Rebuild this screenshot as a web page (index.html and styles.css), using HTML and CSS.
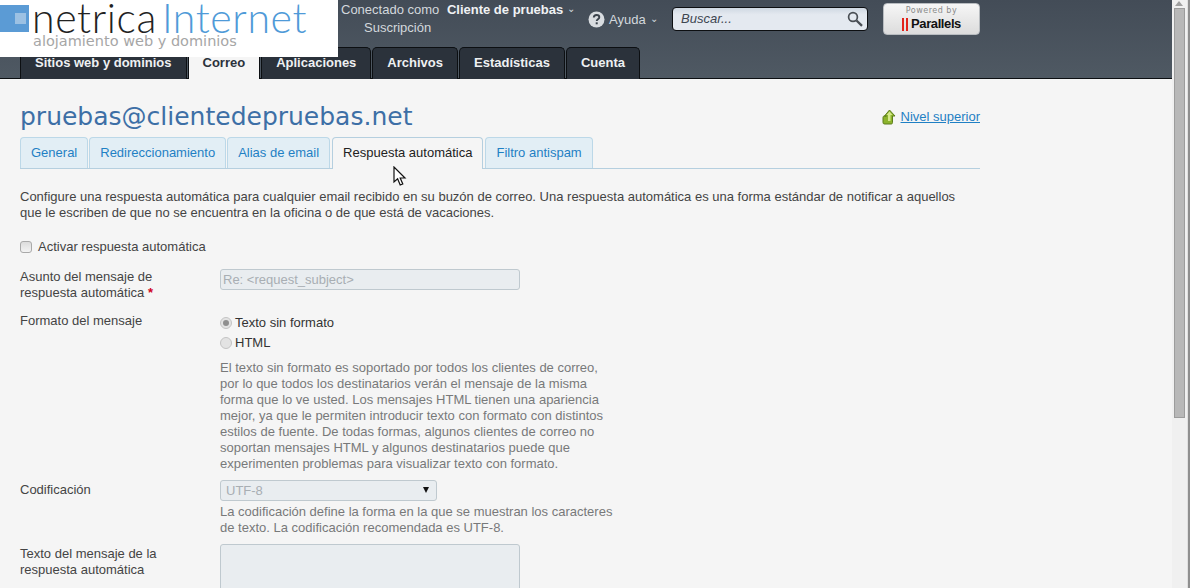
FILE: index.html
```html
<!DOCTYPE html>
<html lang="es">
<head>
    <meta charset="UTF-8">
    <meta name="viewport" content="width=device-width, initial-scale=1.0">
    <title>Respuesta automática</title>
    <link rel="stylesheet" href="styles.css">
</head>
<body>
    <div class="page">
        <div class="logo">
            <div class="logo-mark"><span class="logo-square"></span></div>
            <div class="logo-text">
                <div class="logo-name">netrica<span class="logo-blue">Internet</span></div>
                <div class="logo-slogan">alojamiento web y dominios</div>
            </div>
        </div>

        <header class="header">
            <div class="header-top">
                <div class="user-info">
                    <div>Conectado como <b class="user-name">Cliente de pruebas</b> <span class="caret">⌄</span></div>
                    <div class="user-sub">Suscripción</div>
                </div>
                <div class="help">
                    <svg class="help-icon" width="17" height="17" viewBox="0 0 17 17"><circle cx="8.5" cy="8.5" r="8" fill="#d8dce0"/><path d="M5.8 6.6c0-1.7 1.2-2.6 2.8-2.6s2.7.9 2.7 2.2c0 2-2.6 2-2.6 3.8" fill="none" stroke="#3b434c" stroke-width="1.9"/><rect x="7.7" y="11.3" width="2" height="2" fill="#3b434c"/></svg>
                    <span>Ayuda</span> <span class="caret">⌄</span>
                </div>
                <div class="search">
                    <span class="search-text">Buscar...</span>
                    <svg width="16" height="16" viewBox="0 0 16 16"><circle cx="6" cy="6" r="4.4" fill="none" stroke="#4a4f55" stroke-width="1.7"/><path d="M9.5 9.5L15 14.8" stroke="#4a4f55" stroke-width="2.4"/></svg>
                </div>
                <div class="powered">
                    <div class="powered-by">Powered by</div>
                    <div class="parallels"><span class="parallels-bars"></span><span>Parallels</span></div>
                </div>
            </div>
            <nav class="main-nav">
                <a class="main-tab">Sitios web y dominios</a>
                <a class="main-tab active">Correo</a>
                <a class="main-tab">Aplicaciones</a>
                <a class="main-tab">Archivos</a>
                <a class="main-tab">Estadísticas</a>
                <a class="main-tab">Cuenta</a>
            </nav>
        </header>

        <main class="content">
            <div class="title-row">
                <h1>pruebas@clientedepruebas.net</h1>
                <a class="up-level">
                    <svg width="14" height="16" viewBox="0 0 14 16"><path d="M7.5 1L13 7H10.500V13.500C10.500 14.500 10 15 9 15H3C1.500 15 1 14.500 1 13.500V8.500C1 7.500 1.500 7 2.500 7H4.500H2.500Z" fill="#8cb32c" stroke="#5d7d1c" stroke-width="1"/><path d="M7.500 2.500L10.500 6H8.500V12H6V6H4.500Z" fill="#d5e88a"/></svg>
                    <span>Nivel superior</span>
                </a>
            </div>

            <div class="tabs">
                <a class="tab">General</a>
                <a class="tab">Redireccionamiento</a>
                <a class="tab">Alias de email</a>
                <a class="tab active">Respuesta automática</a>
                <a class="tab">Filtro antispam</a>
            </div>

            <p class="intro">Configure una respuesta automática para cualquier email recibido en su buzón de correo. Una respuesta automática es una forma estándar de notificar a aquellos que le escriben de que no se encuentra en la oficina o de que está de vacaciones.</p>

            <label class="check-row"><span class="fake-check"></span>Activar respuesta automática</label>

            <div class="form-row subject-row">
                <div class="form-label">Asunto del mensaje de respuesta automática <span class="required">*</span></div>
                <div class="form-field">
                    <div class="input subject-input">Re: &lt;request_subject&gt;</div>
                </div>
            </div>

            <div class="form-row format-row">
                <div class="form-label">Formato del mensaje</div>
                <div class="form-field">
                    <div class="radio-row"><span class="fake-radio checked"></span>Texto sin formato</div>
                    <div class="radio-row"><span class="fake-radio"></span>HTML</div>
                    <p class="hint format-hint">El texto sin formato es soportado por todos los clientes de correo, por lo que todos los destinatarios verán el mensaje de la misma forma que lo ve usted. Los mensajes HTML tienen una apariencia mejor, ya que le permiten introducir texto con formato con distintos estilos de fuente. De todas formas, algunos clientes de correo no soportan mensajes HTML y algunos destinatarios puede que experimenten problemas para visualizar texto con formato.</p>
                </div>
            </div>

            <div class="form-row encoding-row">
                <div class="form-label">Codificación</div>
                <div class="form-field">
                    <div class="input select">UTF-8<span class="select-arrow"></span></div>
                    <p class="hint">La codificación define la forma en la que se muestran los caracteres de texto. La codificación recomendada es UTF-8.</p>
                </div>
            </div>

            <div class="form-row message-row">
                <div class="form-label">Texto del mensaje de la respuesta automática</div>
                <div class="form-field">
                    <div class="input textarea"></div>
                </div>
            </div>

            <svg class="cursor" width="14" height="21" viewBox="0 0 14 21"><path d="M1 1V16L4.600 12.800L7.200 19L9.800 18L7.200 12H12Z" fill="#fff" stroke="#111" stroke-width="1.200"/></svg>
        </main>
    </div>

    <div class="scrollbar">
        <span class="scroll-arrow"></span>
        <div class="scroll-thumb"></div>
    </div>
</body>
</html>
```

FILE: styles.css
```css
html, body {
    height: 100%;
}
body {
    margin: 0;
    display: flex;
    height: 588px;
    overflow: hidden;
    background-color: #f5f5f5;
    color: #444;
    font-family: "Liberation Sans", Arial, sans-serif;
    font-size: 13px;
    line-height: 16px;
}
.page {
    position: relative;
    width: 1172px;
    height: 588px;
    overflow: hidden;
}

/* logo sits over the header */
.logo {
    position: absolute;
    left: 0;
    top: 0;
    width: 338px;
    height: 57px;
    background-color: #fff;
    display: flex;
    z-index: 2;
}
.logo-mark {
    width: 29px;
    height: 27px;
    margin-top: 5px;
    background-color: #5b9bd5;
    border-bottom: 0;
    position: relative;
}
.logo-square {
    position: absolute;
    left: 15px;
    top: 8px;
    width: 11px;
    height: 11px;
    background-color: #9cc1e3;
}
.logo-text {
    margin-left: 3px;
}
.logo-name {
    font-family: Lato, sans-serif;
    font-weight: 300;
    font-size: 41px;
    line-height: 36px;
    letter-spacing: 0.6px;
    color: #222;
}
.logo-blue {
    color: #4f9ad8;
    margin-left: 5px;
}
.logo-slogan {
    font-family: "DejaVu Sans", sans-serif;
    font-weight: 400;
    font-size: 14.500px;
    line-height: 16px;
    margin-top: -3px;
    margin-left: 1px;
    color: #a6a6a6;
}

.header {
    height: 78px;
    border-bottom: 1px solid #0c0f12;
    background: linear-gradient(#434c57, #4f5963);
    display: flex;
    flex-direction: column;
    justify-content: space-between;
}
.header-top {
    display: flex;
    align-items: flex-start;
    color: #d3d8dd;
    padding-left: 341px;
}
.user-info {
    width: 236px;
    padding-top: 1px;
    line-height: 18px;
    white-space: nowrap;
}
.user-name {
    color: #f0f2f4;
    margin-left: 4px;
}
.user-sub {
    padding-left: 23px;
}
.caret {
    display: inline-block;
    font-size: 10px;
    line-height: 10px;
    position: relative;
    top: -2px;
}
.help {
    width: 84px;
    margin-top: 11px;
    margin-left: 11px;
    display: flex;
    align-items: center;
    gap: 4px;
    white-space: nowrap;
}
.help .caret {
    top: -1px;
}
.search {
    box-sizing: border-box;
    width: 196px;
    height: 24px;
    margin-top: 7px;
    padding: 0 4px 0 8px;
    display: flex;
    align-items: center;
    justify-content: space-between;
    background: linear-gradient(#cfd8e2, #e4e9f0 30%);
    border: 1px solid #0d0f12;
    border-radius: 4px;
}
.search-text {
    font-style: italic;
    color: #3d4650;
}
.powered {
    box-sizing: border-box;
    width: 97px;
    height: 32px;
    margin-top: 3px;
    margin-left: 15px;
    background: linear-gradient(#f6f6f6, #dcdcdc);
    border: 1px solid #b8bcc0;
    border-radius: 4px;
    text-align: center;
}
.powered-by {
    font-family: "DejaVu Sans", sans-serif;
    font-size: 8px;
    line-height: 12px;
    letter-spacing: 0.5px;
    color: #8a8a8a;
    margin-top: 1px;
}
.parallels {
    display: flex;
    justify-content: center;
    align-items: center;
    gap: 3px;
    font-size: 13px;
    line-height: 14px;
    font-weight: 700;
    letter-spacing: -0.4px;
    color: #111;
}
.parallels-bars {
    width: 2px;
    height: 13px;
    border-left: 2px solid #e2231a;
    border-right: 2px solid #e2231a;
}

.main-nav {
    display: flex;
    padding-left: 20px;
    gap: 1px;
    height: 31px;
}
.main-tab {
    box-sizing: border-box;
    height: 32px;
    padding: 0 14px;
    background-color: #2b323b;
    border: 1px solid #0c0f12;
    border-bottom: 0;
    border-radius: 5px 5px 0 0;
    color: #eef0f2;
    font-weight: 700;
    line-height: 29px;
    white-space: nowrap;
}
.main-tab.active {
    background-color: #f5f5f5;
    color: #2b323b;
}

.content {
    position: relative;
    width: 960px;
    padding-left: 20px;
}
.title-row {
    display: flex;
    justify-content: space-between;
    align-items: center;
    height: 58px;
    padding-top: 0;
}
h1 {
    margin: 18px 0 0;
    font-family: "DejaVu Sans", sans-serif;
    font-weight: 400;
    font-size: 25px;
    line-height: 40px;
    color: #3d6fa6;
}
.up-level {
    display: flex;
    align-items: center;
    gap: 5px;
    margin-top: 18px;
    color: #1f80c4;
    text-decoration: underline;
}

.tabs {
    display: flex;
    gap: 1px;
    height: 31px;
    border-bottom: 1px solid #b5cfdf;
}
.tab {
    box-sizing: border-box;
    height: 31px;
    padding: 0 10px;
    background-color: #e2eef5;
    border: 1px solid #bcd8e8;
    border-bottom: 0;
    border-radius: 4px 4px 0 0;
    color: #1f80c4;
    line-height: 30px;
    white-space: nowrap;
}
.tab.active {
    height: 32px;
    background-color: #f5f5f5;
    border-color: #b5cfdf;
    color: #222;
    margin: 0 1px;
}

.intro {
    margin: 20px 0 0;
}
.check-row {
    display: flex;
    align-items: center;
    gap: 6px;
    margin-top: 18px;
    height: 16px;
}
.fake-check {
    box-sizing: border-box;
    width: 12px;
    height: 12px;
    margin-top: -1px;
    border: 1px solid #a9a9a9;
    border-radius: 3px;
    background: linear-gradient(#dcdcdc, #f3f3f3);
}

.form-row {
    display: flex;
}
.form-label {
    width: 200px;
    flex-shrink: 0;
    box-sizing: border-box;
    padding-right: 8px;
}
.form-field {
    width: 393px;
}
.required {
    color: #d0021b;
    font-weight: 700;
}
.input {
    box-sizing: border-box;
    background-color: #e9edf0;
    border: 1px solid #bfc9cf;
    border-radius: 3px;
    color: #a8aeb3;
}
.subject-row {
    margin-top: 14px;
}
.subject-input {
    width: 300px;
    height: 21px;
    line-height: 19px;
    padding-left: 2px;
    margin-top: 0;
}
.format-row {
    margin-top: 11px;
}
.format-row .form-label {
    padding-top: 1px;
}
.radio-row {
    display: flex;
    align-items: center;
    height: 20px;
    margin-top: 1px;
    color: #333;
}
.radio-row + .radio-row {
    margin-top: 0;
}
.fake-radio {
    box-sizing: border-box;
    position: relative;
    width: 12px;
    height: 12px;
    margin-right: 3px;
    border: 1px solid #c4c4c4;
    border-radius: 50%;
    background-color: #e3e3e3;
}
.fake-radio.checked::after {
    content: "";
    position: absolute;
    left: 2px;
    top: 2px;
    width: 6px;
    height: 6px;
    border-radius: 50%;
    background-color: #8f8f8f;
}
.hint {
    margin: 0;
    color: #78797a;
}
.format-hint {
    margin-top: 7px;
}
.encoding-row {
    margin-top: 8px;
}
.encoding-row .form-label {
    padding-top: 2px;
}
.select {
    position: relative;
    width: 217px;
    height: 21px;
    padding-left: 5px;
    line-height: 19px;
    margin-bottom: 3px;
}
.select-arrow {
    position: absolute;
    right: 7px;
    top: 6px;
    border-left: 3.500px solid transparent;
    border-right: 3.500px solid transparent;
    border-top: 6px solid #111;
}
.message-row {
    margin-top: 8px;
}
.message-row .form-label {
    padding-top: 2px;
}
.textarea {
    width: 300px;
    height: 100px;
}

.cursor {
    position: absolute;
    left: 393px;
    top: 87px;
}

.scrollbar {
    position: relative;
    box-sizing: border-box;
    width: 18px;
    height: 588px;
    background: linear-gradient(90deg, #f0f0f0 15px, #e0e0e0 15px, #e0e0e0 16px, #8f8f8f 16px);
}
.scroll-arrow {
    position: absolute;
    left: 3px;
    top: 1px;
    border-left: 4px solid transparent;
    border-right: 4px solid transparent;
    border-bottom: 5px solid #a0a0a0;
}
.scroll-thumb {
    box-sizing: border-box;
    position: absolute;
    left: 2px;
    top: 8px;
    width: 11px;
    height: 410px;
    background-color: #b8b8b8;
    border: 1px solid #9c9c9c;
}
```
